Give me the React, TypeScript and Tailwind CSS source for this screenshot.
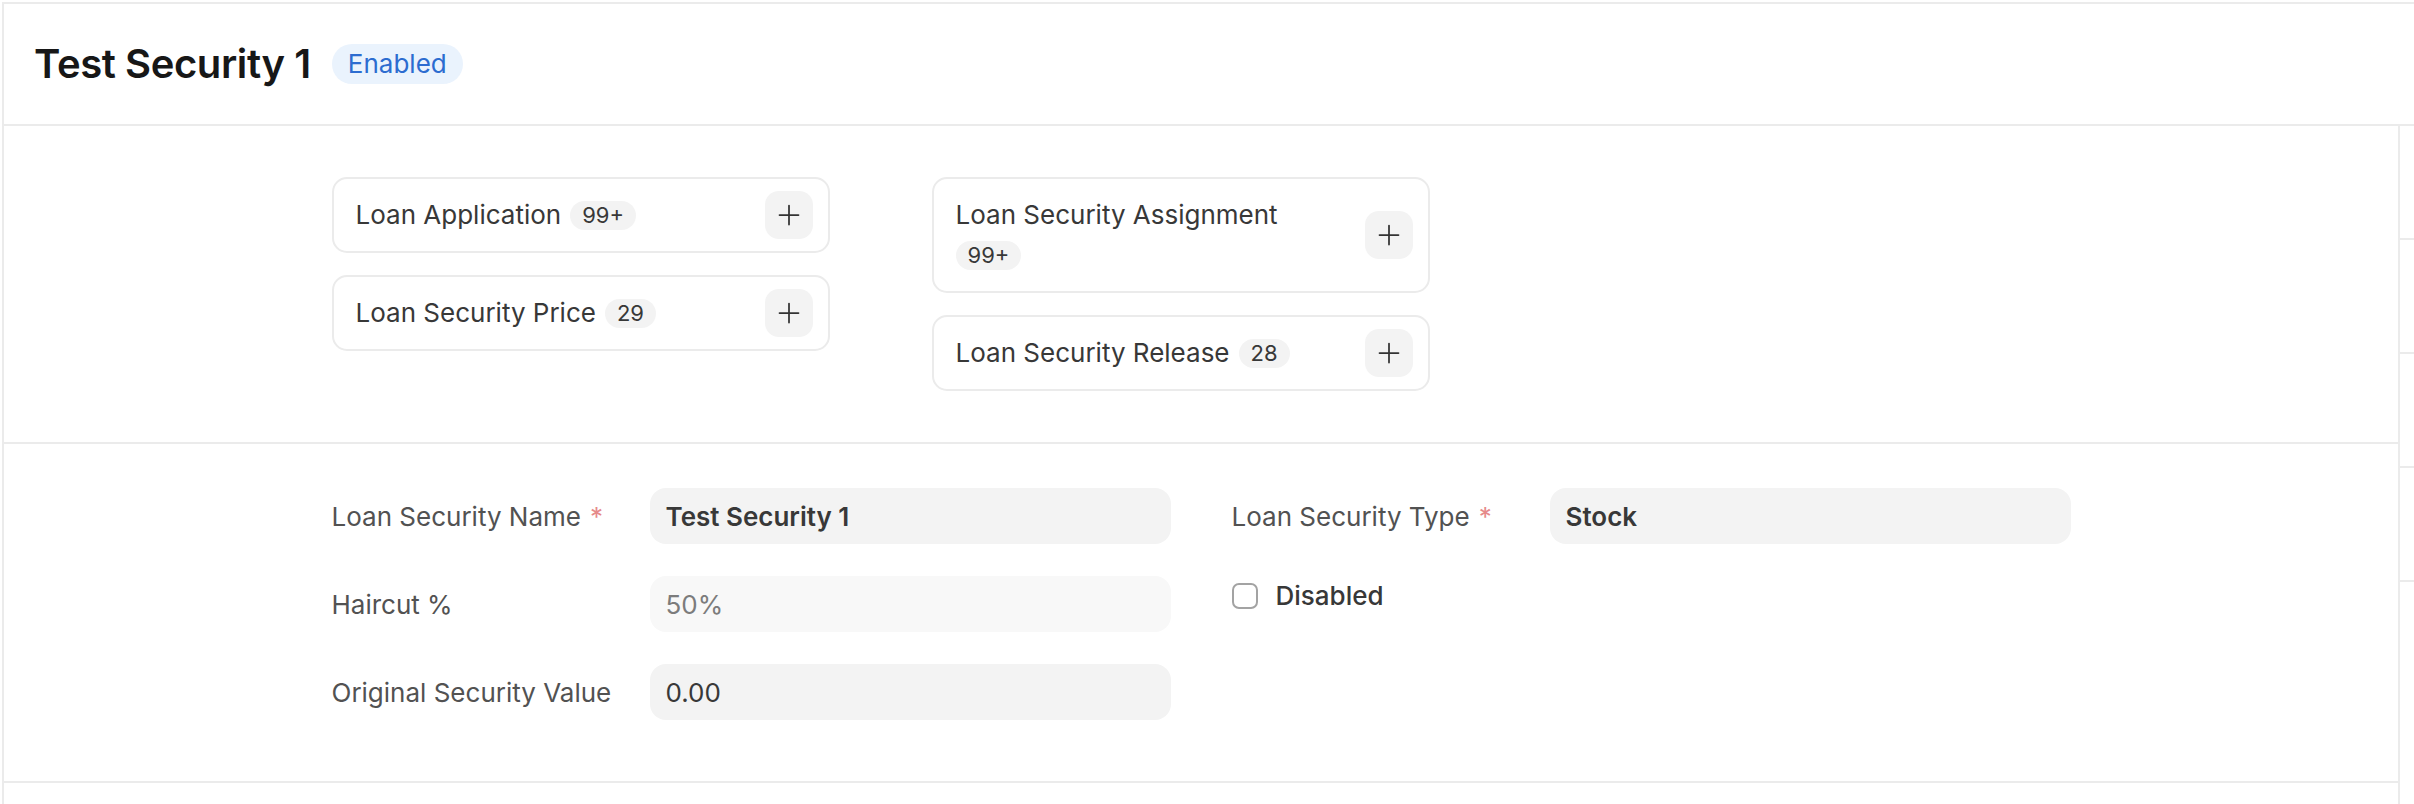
const connections = [
  [
    { label: 'Loan Application', count: '99+' },
    { label: 'Loan Security Price', count: '29' },
  ],
  [
    { label: 'Loan Security Assignment', count: '99+' },
    { label: 'Loan Security Release', count: '28' },
  ],
];

function PlusIcon() {
  return (
    <svg width="22" height="22" viewBox="0 0 22 22" fill="none" stroke="#333333" strokeWidth="1.75" strokeLinecap="round">
      <path d="M11 1.5v19M1.5 11h19" />
    </svg>
  );
}

function LinkCard({ label, count }: { label: string; count: string }) {
  return (
    <div className="flex items-center justify-between rounded-[15px] border-2 border-[#ebebeb] py-[12px] pl-[22px] pr-[15px]">
      <div className="flex max-w-[360px] flex-wrap items-center gap-x-[9px] gap-y-[6px] py-[7px]">
        <span className="text-[26px] leading-[34px] text-[#383838]">{label}</span>
        <span className="flex h-[34px] items-center">
          <span className="h-[29px] rounded-full bg-[#f3f3f3] px-[12px] text-[22px] leading-[29px] text-[#383838]">
            {count}
          </span>
        </span>
      </div>
      <button className="flex h-[48px] w-[48px] shrink-0 items-center justify-center rounded-[14px] bg-[#f3f3f3]">
        <PlusIcon />
      </button>
    </div>
  );
}

function Field({
  label,
  value,
  required,
  muted,
  bold,
}: {
  label: string;
  value: string;
  required?: boolean;
  muted?: boolean;
  bold?: boolean;
}) {
  return (
    <div className="flex items-center">
      <div className="w-[318px] shrink-0 text-[26px] leading-[39px] text-[#525252]">
        {label}
        {required && <span className="ml-[9px] text-[#e68a8a]">*</span>}
      </div>
      <div
        className={
          'flex h-[56px] flex-1 items-center rounded-[16px] pl-[16px] text-[26px] ' +
          (muted ? 'bg-[#f8f8f8] text-[#7c7c7c]' : 'bg-[#f3f3f3] text-[#383838]') +
          (bold ? ' font-semibold' : '')
        }
      >
        {value}
      </div>
    </div>
  );
}

export default function App() {
  return (
    <div className="min-h-[804px] w-full overflow-hidden bg-white pl-[2px] pt-[2px] font-[Inter,sans-serif]">
      <div className="min-h-[802px] border-l-2 border-t-2 border-[#ebebeb]">
        {/* Page head */}
        <header className="flex h-[122px] items-center gap-[21px] border-b-2 border-[#ebebeb] pl-[30px]">
          <h1 className="text-[40px] font-semibold tracking-[-0.4px] text-[#171717]">Test Security 1</h1>
          <span className="h-[40px] rounded-full bg-[#eaf3fd] px-[16px] text-[26px] leading-[40px] text-[#2c6cd0]">
            Enabled
          </span>
        </header>

        <div className="flex min-h-[678px]">
          <main className="flex-1">
            {/* Connections */}
            <section className="border-b-2 border-[#ebebeb] pb-[51px] pt-[51px]">
              <div className="mx-auto flex w-[1739px] gap-[102px]">
                {connections.map((col, i) => (
                  <div key={i} className="flex w-[498px] flex-col gap-[22px]">
                    {col.map((c) => (
                      <LinkCard key={c.label} label={c.label} count={c.count} />
                    ))}
                  </div>
                ))}
              </div>
            </section>

            {/* Details */}
            <section className="border-b-2 border-[#ebebeb] pb-[61px] pt-[44px]">
              <div className="mx-auto grid w-[1739px] grid-cols-2 gap-x-[61px]">
                <div className="flex flex-col gap-[32px]">
                  <Field label="Loan Security Name" value="Test Security 1" required bold />
                  <Field label="Haircut %" value="50%" muted />
                  <Field label="Original Security Value" value="0.00" />
                </div>
                <div className="flex flex-col gap-[32px]">
                  <Field label="Loan Security Type" value="Stock" required bold />
                  <label className="flex h-[39px] items-center gap-[18px]">
                    <span className="h-[26px] w-[26px] rounded-[7px] border-2 border-[#a3a3a3] bg-white" />
                    <span className="text-[26px] font-medium text-[#383838]">Disabled</span>
                  </label>
                </div>
              </div>
            </section>
          </main>

          {/* Sidebar edge */}
          <aside className="w-[16px] shrink-0 border-l-2 border-[#ebebeb]">
            {[0, 1, 2, 3].map((i) => (
              <div key={i} className="h-[114px] border-b-2 border-[#ebebeb]" />
            ))}
          </aside>
        </div>
      </div>
    </div>
  );
}
